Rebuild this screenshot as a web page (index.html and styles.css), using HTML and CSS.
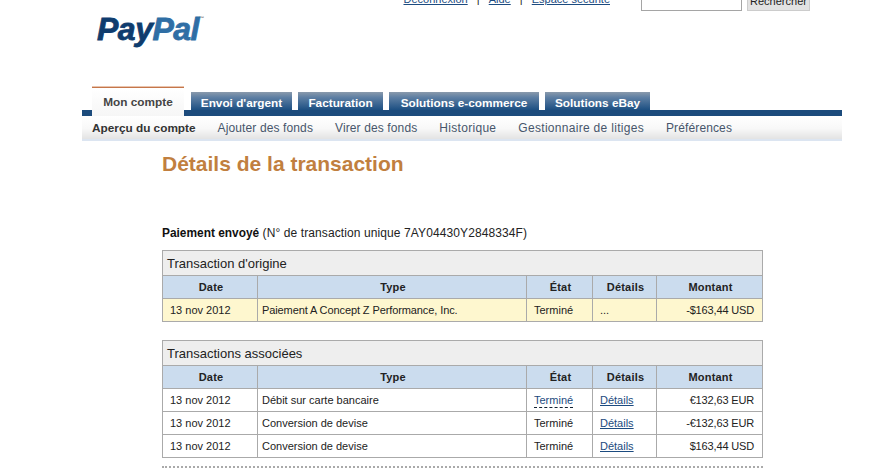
FILE: index.html
```html
<!DOCTYPE html>
<html lang="fr">
<head>
<meta charset="utf-8">
<title>Détails de la transaction</title>
<link rel="stylesheet" href="styles.css">
</head>
<body>
<div class="page">
  <header class="top">
    <div class="logo"><span class="pay">Pay</span><span class="pal">Pal</span><span class="tm">™</span></div>
    <div class="util">
      <nav class="links">
        <a href="#">Déconnexion</a><span class="sep">|</span><a href="#">Aide</a><span class="sep">|</span><a href="#">Espace sécurité</a>
      </nav>
      <form class="search">
        <input class="search-box" type="text" aria-label="Rechercher">
        <button class="search-btn" type="button">Rechercher</button>
      </form>
    </div>
  </header>

  <nav class="tabs">
    <a class="tab active" href="#">Mon compte</a>
    <a class="tab w1" href="#">Envoi d'argent</a>
    <a class="tab w2" href="#">Facturation</a>
    <a class="tab w3" href="#">Solutions e-commerce</a>
    <a class="tab w4" href="#">Solutions eBay</a>
  </nav>
  <div class="bar"></div>
  <nav class="subnav">
    <a class="current" href="#">Aperçu du compte</a>
    <a href="#">Ajouter des fonds</a>
    <a href="#">Virer des fonds</a>
    <a class="wide" href="#">Historique</a>
    <a class="wide" href="#">Gestionnaire de litiges</a>
    <a href="#">Préférences</a>
  </nav>

  <main class="content">
    <h1>Détails de la transaction</h1>
    <p class="intro"><strong>Paiement envoyé</strong> (N° de transaction unique 7AY04430Y2848334F)</p>

    <table class="tx origin">
      <colgroup><col class="c-date"><col class="c-type"><col class="c-state"><col class="c-det"><col class="c-amt"></colgroup>
      <tr><th class="cap" colspan="5">Transaction d'origine</th></tr>
      <tr class="head"><th>Date</th><th>Type</th><th>État</th><th>Détails</th><th>Montant</th></tr>
      <tr class="hl"><td class="date">13 nov 2012</td><td class="long">Paiement A Concept Z Performance, Inc.</td><td class="pad">Terminé</td><td class="pad">...</td><td class="amt">-$163,44 USD</td></tr>
    </table>

    <table class="tx">
      <colgroup><col class="c-date"><col class="c-type"><col class="c-state"><col class="c-det"><col class="c-amt"></colgroup>
      <tr><th class="cap" colspan="5">Transactions associées</th></tr>
      <tr class="head"><th>Date</th><th>Type</th><th>État</th><th>Détails</th><th>Montant</th></tr>
      <tr><td class="date">13 nov 2012</td><td>Débit sur carte bancaire</td><td class="pad"><a class="dashed" href="#">Terminé</a></td><td class="pad"><a href="#">Détails</a></td><td class="amt">€132,63 EUR</td></tr>
      <tr><td class="date">13 nov 2012</td><td>Conversion de devise</td><td class="pad">Terminé</td><td class="pad"><a href="#">Détails</a></td><td class="amt">-€132,63 EUR</td></tr>
      <tr><td class="date">13 nov 2012</td><td>Conversion de devise</td><td class="pad">Terminé</td><td class="pad"><a href="#">Détails</a></td><td class="amt">$163,44 USD</td></tr>
    </table>
    <div class="dots"></div>
  </main>
</div>
</body>
</html>
```
FILE: styles.css
```css
* { box-sizing: border-box; }
html, body { margin: 0; padding: 0; background: #fff; overflow: hidden; height: 100%; }
body { font-family: "Liberation Sans", Arial, sans-serif; color: #222; font-size: 11px; }
.page { width: 760px; margin-left: 82px; }

.top { display: flex; justify-content: space-between; height: 87px; align-items: flex-start; }
.logo { margin: 11px 0 0 15px; font: italic bold 32px/36px "Liberation Sans", sans-serif; letter-spacing: -0.5px; -webkit-text-stroke: 0.8px; display: flex; }
.pay { color: #0f3c6e; }
.pal { color: #2f6ea5; }
.tm { font-size: 5px; line-height: 14px; color: #777; -webkit-text-stroke: 0; letter-spacing: 0; }
.util { display: flex; align-items: flex-start; margin-top: -10px; margin-right: 32px; }
.links { display: flex; font-size: 11px; line-height: 13px; margin-top: 3px; margin-right: 31px; }
.links a { color: #1c4b80; }
.sep { width: 21px; text-align: center; color: #222; }
.search { display: flex; gap: 5px; }
.search-box { width: 101px; height: 21px; border: 1px solid #a5a5a5; background: #fff; padding: 0; }
.search-btn { width: 63px; height: 21px; margin: 0; padding: 0; border: 1px solid #ccc; background: #e2e2e2; font: 11px "Liberation Sans", sans-serif; color: #222; }

.tabs { display: flex; align-items: flex-end; gap: 6px; height: 23px; padding-left: 10px; }
.tab { display: block; height: 18px; font: bold 11.8px/23px "Liberation Sans", sans-serif; color: #fff; text-align: center; text-decoration: none; background: linear-gradient(#8a9aac, #5e7fa3 30%, #1c4f82); }
.tab.active { height: 29px; width: 92px; margin-bottom: -6px; margin-right: 1px; position: relative; background: linear-gradient(#fff, #f6f6f6); border-top: 1px solid #c5764a; color: #444; line-height: 29px; z-index: 1; box-shadow: 0 -1px 0 #e9c4ae; }
.w1 { width: 101px; }
.w2 { width: 85px; }
.w3 { width: 150px; }
.w4 { width: 105px; }
.bar { height: 6px; background: #1c4b7c; }

.subnav { display: flex; height: 25px; align-items: center; padding: 0 0 2px 10px; background: linear-gradient(#fff, #f8f8f8 50%, #e4e4e4 90%, #dce5f1 92%); font-size: 12px; }
.subnav a { color: #47566b; text-decoration: none; margin-right: 22px; letter-spacing: 0.12px; }
.subnav .wide { letter-spacing: 0.3px; }
.subnav .current { color: #333; font-weight: bold; font-size: 11.8px; letter-spacing: 0; }

.content { padding-left: 80px; }
h1 { margin: 11px 0 0; font-size: 21px; line-height: 24px; color: #c17f3f; font-weight: bold; }
.intro { margin: 50px 0 0; font-size: 12px; line-height: 14px; color: #222; letter-spacing: 0.1px; }
.intro strong { color: #111; font-size: 11.9px; letter-spacing: 0; }

.tx { border-collapse: collapse; table-layout: fixed; width: 600px; margin-top: 10px; }
.tx + .tx { margin-top: 18px; }
.tx th, .tx td { border: 1px solid #aaa; padding: 0; height: 23px; font-size: 11px; }
.tx td { padding: 0 4px; color: #222; }
.tx .date { padding-left: 7px; }
.tx .pad { padding-left: 7px; }
.tx .long { letter-spacing: -0.1px; }
.tx a { color: #1c4b80; }
.tx .dashed { text-decoration: none; border-bottom: 1px dashed #123; padding-bottom: 1px; }
.tx .amt { text-align: right; padding-right: 8px; letter-spacing: -0.15px; }
.c-date { width: 95px; }
.c-type { width: 269px; }
.c-state { width: 66px; }
.c-det { width: 64px; }
.c-amt { width: 106px; }
.tx .cap { height: 25px; padding-left: 4px; background: #eee; font-size: 13px; font-weight: normal; text-align: left; color: #222; }
.tx .head th { padding-left: 2px; background: #cbdcee; font-weight: bold; color: #222; letter-spacing: 0.2px; }
.hl td { background: #fef7cf; }
.dots { margin-top: 8px; width: 601px; border-top: 2px dotted #aaa; }
```
